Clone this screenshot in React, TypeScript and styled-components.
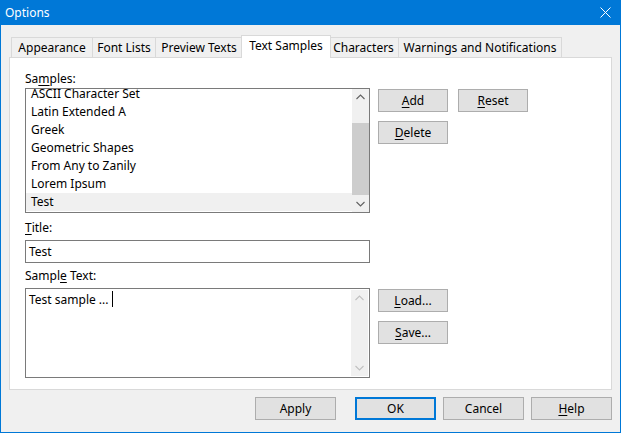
import React from "react";
import styled, { createGlobalStyle } from "styled-components";

const GlobalStyle = createGlobalStyle`
  html, body {
    margin: 0;
    padding: 0;
    background: #ffffff;
  }
  body {
    font-family: "Noto Sans", "Liberation Sans", sans-serif;
    font-size: 12px;
    color: #000;
  }
  * {
    box-sizing: border-box;
  }
`;

const Window = styled.div`
  width: 621px;
  height: 433px;
  border: 1px solid #0078d7;
  border-top: none;
  background: #f0f0f0;
  display: flex;
  flex-direction: column;
`;

const TitleBar = styled.div`
  height: 25px;
  flex-shrink: 0;
  background: #0078d7;
  color: #fff;
  display: flex;
  align-items: center;
  justify-content: space-between;
  padding: 0 9px 0 4px;
`;

const TitleText = styled.span`
  font-size: 12px;
`;

const Body = styled.div`
  flex: 1;
  padding: 12px 8px 0;
  display: flex;
  flex-direction: column;
`;

const TabRow = styled.div`
  display: flex;
  align-items: flex-end;
  height: 20px;
  padding-left: 2px;
`;

const Tab = styled.div<{ $w: number; $active?: boolean; $first?: boolean }>`
  width: ${(p) => p.$w}px;
  height: ${(p) => (p.$active ? 23 : 20)}px;
  margin-left: ${(p) => (p.$first ? 0 : p.$active ? -2 : -1)}px;
  margin-right: ${(p) => (p.$active ? -2 : 0)}px;
  margin-bottom: ${(p) => (p.$active ? -1 : 0)}px;
  border: 1px solid #d9d9d9;
  border-bottom: none;
  background: ${(p) => (p.$active ? "#ffffff" : "#f0f0f0")};
  display: flex;
  align-items: center;
  justify-content: center;
  padding-bottom: ${(p) => (p.$active ? 3 : 0)}px;
  white-space: nowrap;
  position: relative;
  z-index: ${(p) => (p.$active ? 2 : 1)};
`;

const Panel = styled.div`
  height: 333px;
  border: 1px solid #d9d9d9;
  background: #fff;
  padding: 13px 15px 0;
  display: flex;
  flex-direction: column;
`;

const Label = styled.div<{ $top?: number }>`
  line-height: 15px;
  height: 15px;
  margin-top: ${(p) => p.$top ?? 0}px;
  margin-bottom: ${(p) => (p.$top ? 5 : 2)}px;
`;

const U = styled.span`
  text-decoration: underline;
  text-underline-offset: 2px;
`;

const FieldRow = styled.div`
  display: flex;
  gap: 8px;
`;

const ListBox = styled.div<{ $h: number }>`
  width: 345px;
  height: ${(p) => p.$h}px;
  border: 1px solid #7a7a7a;
  background: #fff;
  display: flex;
  flex-shrink: 0;
`;

const ListItems = styled.div`
  flex: 1;
  overflow: hidden;
`;

const ListInner = styled.div`
  margin-top: -4px;
`;

const ListItem = styled.div<{ $selected?: boolean }>`
  height: 18px;
  line-height: 18px;
  padding-left: 5px;
  background: ${(p) => (p.$selected ? "#f0f0f0" : "transparent")};
  white-space: nowrap;
`;

const ScrollBar = styled.div<{ $inset?: boolean }>`
  width: 17px;
  flex-shrink: 0;
  background: #f0f0f0;
  display: flex;
  flex-direction: column;
  margin: ${(p) => (p.$inset ? "1px 1px 1px 0" : "0")};
`;

const ScrollTrack = styled.div`
  flex: 1;
  display: flex;
  flex-direction: column;
  justify-content: flex-end;
`;

const Thumb = styled.div`
  height: 72px;
  background: #cdcdcd;
`;

const TextArea = styled.div`
  flex: 1;
  padding: 3px 3px;
  line-height: 15px;
  white-space: pre;
  display: flex;
  align-items: flex-start;
`;

const Caret = styled.span`
  display: inline-block;
  width: 1px;
  height: 16px;
  background: #000;
  margin-top: -1px;
`;

const TextInput = styled.div`
  width: 345px;
  height: 23px;
  border: 1px solid #7a7a7a;
  background: #fff;
  padding: 0 3px;
  line-height: 21px;
`;

const ButtonColumn = styled.div`
  display: flex;
  flex-direction: column;
  gap: 9px;
  padding-top: 1px;
`;

const ButtonLine = styled.div`
  display: flex;
  gap: 10px;
`;

const Button = styled.button<{ $w: number; $default?: boolean }>`
  width: ${(p) => p.$w}px;
  height: 23px;
  padding: 0;
  font: inherit;
  color: #000;
  background: #e1e1e1;
  border: ${(p) => (p.$default ? "2px solid #0078d7" : "1px solid #adadad")};
`;

const Footer = styled.div`
  display: flex;
  justify-content: flex-end;
  gap: 7px;
  margin-top: 7px;
`;

const Spacer = styled.div`
  width: 5px;
`;

const Chevron = ({ dir, color }: { dir: "up" | "down"; color: string }) => (
  <svg width="17" height="17" viewBox="0 0 17 17">
    <polyline
      points={dir === "up" ? "4.5,10 8.5,6 12.5,10" : "4.5,7 8.5,11 12.5,7"}
      fill="none"
      stroke={color}
      strokeWidth="1.1"
    />
  </svg>
);

const CloseIcon = () => (
  <svg width="11" height="11" viewBox="0 0 11 11">
    <path d="M0.5 0.5 L10.5 10.5 M10.5 0.5 L0.5 10.5" stroke="#fff" strokeWidth="1" />
  </svg>
);

const tabs = [
  { label: "Appearance", w: 82 },
  { label: "Font Lists", w: 64 },
  { label: "Preview Texts", w: 88 },
  { label: "Text Samples", w: 90, active: true },
  { label: "Characters", w: 71 },
  { label: "Warnings and Notifications", w: 164 },
];

const samples = [
  "ASCII Character Set",
  "Latin Extended A",
  "Greek",
  "Geometric Shapes",
  "From Any to Zanily",
  "Lorem Ipsum",
  "Test",
];

export default function App() {
  return (
    <>
      <GlobalStyle />
      <Window>
        <TitleBar>
          <TitleText>Options</TitleText>
          <CloseIcon />
        </TitleBar>
        <Body>
          <TabRow>
            {tabs.map((t, i) => (
              <Tab key={t.label} $w={t.w} $active={t.active} $first={i === 0}>
                {t.label}
              </Tab>
            ))}
          </TabRow>
          <Panel>
            <Label>
              Sa<U>m</U>ples:
            </Label>
            <FieldRow>
              <ListBox $h={125}>
                <ListItems>
                  <ListInner>
                    {samples.map((s) => (
                      <ListItem key={s} $selected={s === "Test"}>
                        {s}
                      </ListItem>
                    ))}
                  </ListInner>
                </ListItems>
                <ScrollBar>
                  <Chevron dir="up" color="#606060" />
                  <ScrollTrack>
                    <Thumb />
                  </ScrollTrack>
                  <Chevron dir="down" color="#606060" />
                </ScrollBar>
              </ListBox>
              <ButtonColumn>
                <ButtonLine>
                  <Button $w={70}>
                    <U>A</U>dd
                  </Button>
                  <Button $w={70}>
                    <U>R</U>eset
                  </Button>
                </ButtonLine>
                <ButtonLine>
                  <Button $w={70}>
                    <U>D</U>elete
                  </Button>
                </ButtonLine>
              </ButtonColumn>
            </FieldRow>
            <Label $top={7}>
              <U>T</U>itle:
            </Label>
            <TextInput>Test</TextInput>
            <Label $top={5}>
              Sampl<U>e</U> Text:
            </Label>
            <FieldRow>
              <ListBox $h={90}>
                <TextArea>
                  Test sample ... <Caret />
                </TextArea>
                <ScrollBar $inset>
                  <Chevron dir="up" color="#c0c0c0" />
                  <ScrollTrack />
                  <Chevron dir="down" color="#c0c0c0" />
                </ScrollBar>
              </ListBox>
              <ButtonColumn>
                <Button $w={70}>
                  <U>L</U>oad...
                </Button>
                <Button $w={70}>
                  <U>S</U>ave...
                </Button>
              </ButtonColumn>
            </FieldRow>
          </Panel>
          <Footer>
            <Button $w={81}>Apply</Button>
            <Spacer />
            <Button $w={81} $default>
              OK
            </Button>
            <Button $w={81}>Cancel</Button>
            <Button $w={81}>
              <U>H</U>elp
            </Button>
          </Footer>
        </Body>
      </Window>
    </>
  );
}
